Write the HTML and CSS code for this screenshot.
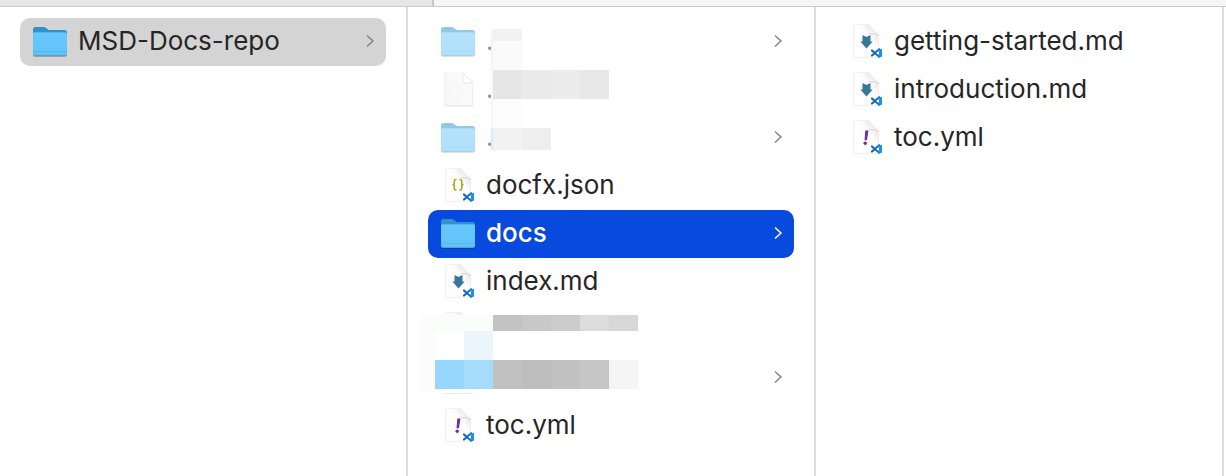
FILE: index.html
```html
<!DOCTYPE html>
<html lang="en">
<head>
<meta charset="utf-8">
<title>MSD-Docs-repo</title>
<link rel="stylesheet" href="styles.css">
</head>
<body>
<svg class="defs" aria-hidden="true">
  <defs>
    <linearGradient id="folderFace" x1="0" y1="0" x2="0" y2="1"><stop offset="0" stop-color="#68c7fa"/><stop offset="1" stop-color="#62c2f8"/></linearGradient>
    <linearGradient id="paper" x1="0" y1="1" x2="1" y2="0"><stop offset="0" stop-color="#fff"/><stop offset=".6" stop-color="#fdfdfd"/><stop offset="1" stop-color="#d8d8d8"/></linearGradient>
    <linearGradient id="fold" x1="0" y1="1" x2="1" y2="0"><stop offset="0" stop-color="#fff"/><stop offset=".4" stop-color="#f4f4f4"/><stop offset="1" stop-color="#c4c4c4"/></linearGradient>
    <linearGradient id="blankPaper" x1="0" y1="1" x2="1" y2="0"><stop offset="0" stop-color="#eee"/><stop offset="1" stop-color="#fbfbfb"/></linearGradient>
    <symbol id="folder" viewBox="0 0 36 36">
      <path d="M1 31V5.500Q1 3 3.500 3H11.500Q13 3 14 4L16 5.500Q16.800 6 18 6H32.500Q35 6 35 8.500V31Z" fill="#3191cf"/>
      <rect x="1.200" y="9" width="33.600" height="24" rx="2" fill="#000" opacity=".25"/>
      <rect x="1" y="8" width="34" height="24" rx="2" fill="#45a5df"/>
      <path d="M1 10Q1 8.500 3 8.500H33Q35 8.500 35 10V29.500Q35 31 33 31H3Q1 31 1 29.500Z" fill="url(#folderFace)"/>
      <path d="M1 27.500H35" stroke="#52b6ef" stroke-width=".8"/>
    </symbol>
    <symbol id="page" viewBox="0 0 36 36">
      <path d="M5.500 0H20L31 11V33.500H5.500Z" fill="url(#paper)"/>
      <path d="M20 .2H5.600V33.500H30.500V11" fill="none" stroke="#ececec" stroke-width=".8"/>
      <path d="M19 0Q22 2 21.500 9Q27 8.500 31 11.500L20 0Z" fill="url(#fold)"/>
      <path d="M20.800 9.500Q26 8.500 31 11.500" fill="none" stroke="#cfcfcf" stroke-width=".8"/>
    </symbol>
    <symbol id="code" viewBox="0 0 36 36">
      <path d="M24 26.500L31 32.500M24 31.500L31 25.500" stroke="#1264be" stroke-width="2.200" fill="none" stroke-linecap="round"/>
      <path d="M30.500 24L34 25.500V32.500L30.500 34Z" fill="#1f8dea"/>
      <path d="M30.800 27V31L28.200 29Z" fill="#fff"/>
    </symbol>
    <symbol id="blank" viewBox="0 0 36 36">
      <path d="M6.500 2H23L33 12V32.500Q33 34.500 31 34.500H6.500Q4.500 34.500 4.500 32.500V4Q4.500 2 6.500 2Z" fill="#999" opacity=".65"/>
      <path d="M6.500 1H23L32.700 11V31.500Q32.700 33.500 31 33.500H6.500Q4.500 33.500 4.500 31.500V3Q4.500 1 6.500 1Z" fill="url(#blankPaper)" stroke="#e4e4e4" stroke-width=".7"/>
      <path d="M23 1V10Q23 11 24 11H32.700Z" fill="#fff" stroke="#c6c6c6" stroke-width=".8"/>
    </symbol>
    <symbol id="markdown" viewBox="0 0 36 36">
      <use href="#page"/>
      <path d="M14.500 11L18.500 13L22.500 11V17.500H24.700L18.500 24.500L12.300 17.500H14.500Z" fill="#37789a"/>
      <use href="#code"/>
    </symbol>
    <symbol id="json" viewBox="0 0 36 36">
      <use href="#page"/>
      <path d="M16.500 11.500H15.800Q14.300 11.500 14.300 13V15Q14.300 16.700 12.500 16.700Q14.300 16.700 14.300 18.500V20.500Q14.300 22 15.800 22H16.500M19.500 11.500H20.200Q21.700 11.500 21.700 13V15Q21.700 16.700 23.500 16.700Q21.700 16.700 21.700 18.500V20.500Q21.700 22 20.200 22H19.500" fill="none" stroke="#a8a81c" stroke-width="1.600"/>
      <use href="#code"/>
    </symbol>
    <symbol id="yaml" viewBox="0 0 36 36">
      <use href="#page"/>
      <path d="M17.300 10.500H20.500L18.900 20.300H16.500Z" fill="#6b2fa0"/>
      <circle cx="17.200" cy="23.200" r="1.700" fill="#6b2fa0"/>
      <use href="#code"/>
    </symbol>
    <symbol id="chevron" viewBox="0 0 8 14">
      <path d="M1.500 2L7 7L1.500 12" fill="none" stroke="currentColor" stroke-width="1.600" stroke-linecap="round" stroke-linejoin="round"/>
    </symbol>
  </defs>
</svg>
<div class="topbar"><div class="topbar-side"></div></div>
<main class="columns">
  <nav class="column" aria-label="Folders">
    <a href="#" class="row current"><svg class="icon"><use href="#folder"/></svg><span class="name">MSD-Docs-repo</span><svg class="chevron"><use href="#chevron"/></svg></a>
  </nav>
  <nav class="column" aria-label="MSD-Docs-repo">
    <a href="#" class="row hidden-item"><svg class="icon"><use href="#folder"/></svg><span class="name">.</span><svg class="chevron"><use href="#chevron"/></svg></a>
    <a href="#" class="row hidden-item"><svg class="icon"><use href="#blank"/></svg><span class="name">.</span></a>
    <a href="#" class="row hidden-item"><svg class="icon"><use href="#folder"/></svg><span class="name">.</span><svg class="chevron"><use href="#chevron"/></svg></a>
    <a href="#" class="row"><svg class="icon"><use href="#json"/></svg><span class="name">docfx.json</span></a>
    <a href="#" class="row selected"><svg class="icon"><use href="#folder"/></svg><span class="name">docs</span><svg class="chevron"><use href="#chevron"/></svg></a>
    <a href="#" class="row"><svg class="icon"><use href="#markdown"/></svg><span class="name">index.md</span></a>
    <a href="#" class="row" aria-label="Redacted file"><svg class="icon"><use href="#json"/></svg><span class="name"></span></a>
    <a href="#" class="row" aria-label="Redacted folder"><svg class="icon"><use href="#folder"/></svg><span class="name"></span><svg class="chevron"><use href="#chevron"/></svg></a>
    <a href="#" class="row"><svg class="icon"><use href="#yaml"/></svg><span class="name">toc.yml</span></a>
    <svg class="mosaic" viewBox="408 7 240 400" shape-rendering="crispEdges" aria-hidden="true">
      <path d="M491 29h2v41h-2z" fill="#eaf7fe"/>
      <path d="M491 70h2v58h-2z" fill="#f1fafe"/>
      <path d="M491 128h2v22h-2z" fill="#d4effd"/>
      <path d="M493 29h29v12h-29z" fill="#f2f2f2"/>
      <path d="M493 41h29v29h-29z" fill="#fafafa"/>
      <path d="M493 70h29v29h-29z" fill="#e6e6e6"/>
      <path d="M522 70h29v29h-29z" fill="#eaeaea"/>
      <path d="M551 70h29v29h-29z" fill="#ececec"/>
      <path d="M580 70h29v29h-29z" fill="#e8e8e8"/>
      <path d="M493 99h29v29h-29z" fill="#fdfdfd"/>
      <path d="M493 128h29v22h-29z" fill="#f2f2f2"/>
      <path d="M522 128h29v22h-29z" fill="#eeeeee"/>
      <path d="M421 315h217v78h-217z" fill="#fff"/>
      <path d="M421 315h14v78h-14z" fill="#fcfcfc"/>
      <path d="M435 315h58v16h-58z" fill="#fafefb"/>
      <path d="M493 315h29v16h-29z" fill="#c3c3c3"/>
      <path d="M522 315h29v16h-29z" fill="#c8c8c8"/>
      <path d="M551 315h29v16h-29z" fill="#cccccc"/>
      <path d="M580 315h29v16h-29z" fill="#dcdcdc"/>
      <path d="M609 315h29v16h-29z" fill="#d7d7d7"/>
      <path d="M464 331h29v29h-29z" fill="#edf5fc"/>
      <path d="M435 360h29v29h-29z" fill="#96d7fb"/>
      <path d="M464 360h29v29h-29z" fill="#a6dcfb"/>
      <path d="M493 360h29v29h-29z" fill="#c1c1c1"/>
      <path d="M522 360h29v29h-29z" fill="#bebebe"/>
      <path d="M551 360h29v29h-29z" fill="#c1c1c1"/>
      <path d="M580 360h29v29h-29z" fill="#c6c6c6"/>
      <path d="M609 360h29v29h-29z" fill="#f5f5f5"/>
      <path d="M551 389h29v4h-29z" fill="#fbfbfb"/>
      <path d="M443 393h30v1h-30z" fill="#ebebeb"/>
    </svg>
  </nav>
  <nav class="column" aria-label="docs">
    <a href="#" class="row"><svg class="icon"><use href="#markdown"/></svg><span class="name">getting-started.md</span></a>
    <a href="#" class="row"><svg class="icon"><use href="#markdown"/></svg><span class="name">introduction.md</span></a>
    <a href="#" class="row"><svg class="icon"><use href="#yaml"/></svg><span class="name">toc.yml</span></a>
  </nav>
</main>
</body>
</html>
```
FILE: styles.css
```css
* { box-sizing: border-box; }

body {
  margin: 0;
  min-height: 100vh;
  display: flex;
  flex-direction: column;
  background: #fff;
  color: #262626;
  font-family: Inter, "Liberation Sans", sans-serif;
  font-size: 26px;
  line-height: 32px;
}

.defs {
  position: absolute;
  width: 0;
  height: 0;
}

.topbar {
  display: flex;
  height: 7px;
  background: #f5f5f5;
  border-bottom: 1px solid #cbcbcb;
}

.topbar-side {
  flex: 0 0 434px;
  background: #e6e6e6;
  border-right: 2px solid #c8c8c8;
}

.columns {
  flex: 1;
  display: grid;
  grid-template-columns: repeat(3, 1fr);
  padding-right: 2px;
}

.column {
  position: relative;
  padding: 11px 20px 0;
  border-right: 2px solid #dcdcdc;
}

.row {
  display: flex;
  align-items: center;
  gap: 10px;
  height: 48px;
  padding: 0 12px;
  border-radius: 10px;
  color: inherit;
  text-decoration: none;
}

.icon {
  flex: none;
  width: 36px;
  height: 36px;
}

.name {
  flex: 1;
  padding-bottom: 2px;
  white-space: nowrap;
}

.chevron {
  flex: none;
  width: 8px;
  height: 14px;
  margin-bottom: 2px;
  color: #858585;
}

.current { background: #d4d4d4; }

.selected {
  background: #084ade;
  color: #fff;
  font-weight: 500;
}

.selected .chevron { color: #fff; }

.hidden-item .icon,
.hidden-item .name { opacity: 0.5; }

.mosaic {
  position: absolute;
  top: 0;
  left: 0;
  width: 240px;
  height: 400px;
}
```
